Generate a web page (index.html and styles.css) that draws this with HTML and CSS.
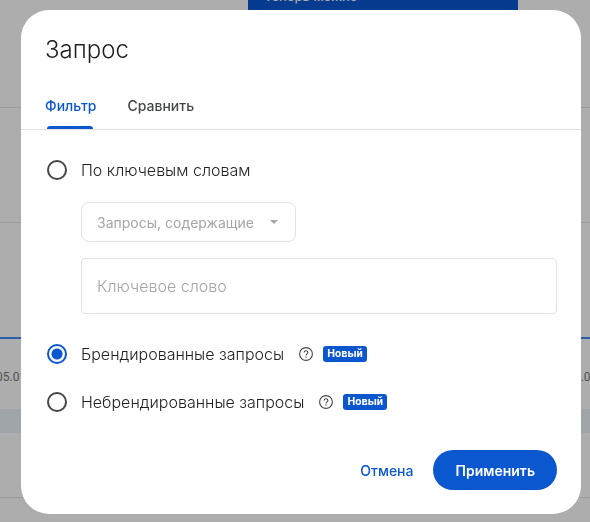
FILE: index.html
```html
<!DOCTYPE html>
<html lang="ru">
<head>
  <meta charset="UTF-8">
  <meta name="viewport" content="width=device-width, initial-scale=1.0">
  <title>Запрос</title>
  <link rel="stylesheet" href="styles.css">
</head>
<body>
  <div class="report" aria-hidden="true">
    <div class="promo">Теперь можно</div>
    <div class="chart">
      <div class="grid-row first"></div>
      <div class="grid-row"></div>
      <div class="grid-row axis"></div>
    </div>
    <div class="dates"><span>05.01.26</span><span>12.01.26</span></div>
    <div class="band"></div>
    <div class="table-head"></div>
  </div>

  <div class="overlay">
    <form class="dialog" role="dialog" aria-labelledby="dialogTitle">
      <h1 class="title" id="dialogTitle">Запрос</h1>
      <div class="tabs" role="tablist">
        <button type="button" class="tab active" role="tab" aria-selected="true">Фильтр</button>
        <button type="button" class="tab" role="tab" aria-selected="false">Сравнить</button>
      </div>

      <div class="options">
        <div class="option">
          <input type="radio" name="query" id="byKeyword">
          <label for="byKeyword">По ключевым словам</label>
        </div>
        <div class="fields">
          <div class="select-box">
            <select aria-label="Условие" disabled>
              <option>Запросы, содержащие</option>
            </select>
            <svg class="arrow" width="8" height="4" viewBox="0 0 8 4"><path d="M0 0h8L4 4z"/></svg>
          </div>
          <input type="text" class="keyword" placeholder="Ключевое слово" aria-label="Ключевое слово" disabled>
        </div>
        <div class="option">
          <input type="radio" name="query" id="branded" checked>
          <label for="branded">Брендированные запросы</label>
          <button type="button" class="help" aria-label="Справка">
            <svg width="14" height="14" viewBox="0 0 14 14"><circle cx="7" cy="7" r="6.4"/><path d="M5.1 5.6C5.1 4.4 5.9 3.7 7 3.7s1.9.7 1.9 1.7c0 1.5-1.9 1.5-1.9 3.1M7 9.5v1.2"/></svg>
          </button>
          <span class="badge">Новый</span>
        </div>
        <div class="option">
          <input type="radio" name="query" id="nonBranded">
          <label for="nonBranded">Небрендированные запросы</label>
          <button type="button" class="help" aria-label="Справка">
            <svg width="14" height="14" viewBox="0 0 14 14"><circle cx="7" cy="7" r="6.4"/><path d="M5.1 5.6C5.1 4.4 5.9 3.7 7 3.7s1.9.7 1.9 1.7c0 1.5-1.9 1.5-1.9 3.1M7 9.5v1.2"/></svg>
          </button>
          <span class="badge">Новый</span>
        </div>
      </div>

      <div class="actions">
        <button type="button" class="btn">Отмена</button>
        <button type="submit" class="btn primary">Применить</button>
      </div>
    </form>
  </div>
</body>
</html>
```
FILE: styles.css
```css
* {
  box-sizing: border-box;
}
:root {
  --blue: #0b57d0;
  --text: #1f1f1f;
  --muted: #444746;
  --line: #e1e3e1;
}
body {
  margin: 0;
  min-height: 100vh;
  overflow: hidden;
  background: #adadad;
  color: var(--text);
  font-family: Inter, Roboto, sans-serif;
}
button, input, select {
  font-family: inherit;
}

/* report behind the dialog */
.promo {
  width: 270px;
  height: 40px;
  margin: -14px auto 0 248px;
  padding: 0 16px;
  background: #063b8f;
  color: #adadad;
  font-size: 13px;
  font-weight: 500;
  line-height: 20px;
}
.chart {
  margin-top: -26px;
}
.grid-row {
  height: 115px;
  border-bottom: 1px solid #9d9d9d;
}
.grid-row.first {
  height: 108px;
}
.grid-row.axis {
  height: 116px;
  border-bottom: 2px solid #2a5caa;
}
.dates {
  display: flex;
  justify-content: space-between;
  margin: 0 -24px 0 -4px;
  padding: 28px 0 22px;
  color: #505152;
  font-family: Roboto, sans-serif;
  font-size: 12px;
  line-height: 20px;
}
.band {
  height: 24px;
  background: #a0a5a9;
}
.table-head {
  height: 65px;
  border-bottom: 1px solid #999;
}

/* dialog */
.overlay {
  position: fixed;
  inset: 0;
  padding: 10px 9px 8px 21px;
}
.dialog {
  max-width: 560px;
  margin: 0 auto;
  padding-bottom: 24px;
  background: #fff;
  border-radius: 28px;
}
.title {
  margin: 0;
  padding: 24px 24px 10px;
  font-size: 24px;
  font-weight: 300;
  line-height: 32px;
}
.tabs {
  display: flex;
  gap: 31px;
  padding: 6px 24px 0;
  border-bottom: 1px solid var(--line);
}
.tab {
  position: relative;
  height: 47px;
  padding: 0;
  border: none;
  background: none;
  color: var(--muted);
  font-size: 14px;
  font-weight: 500;
  cursor: pointer;
}
.tab.active {
  color: var(--blue);
}
.tab.active::after {
  content: "";
  position: absolute;
  right: 3px;
  bottom: 0;
  left: 2px;
  height: 3px;
  border-radius: 3px 3px 0 0;
  background: var(--blue);
}
.options {
  padding: 16px 24px 0;
}
.option {
  display: flex;
  align-items: center;
  height: 48px;
  padding-left: 2px;
  font-size: 16px;
  font-weight: 300;
}
.option input {
  appearance: none;
  width: 20px;
  height: 20px;
  margin: 0 14px 0 0;
  border: 2px solid var(--muted);
  border-radius: 50%;
}
.option input:checked {
  border-color: var(--blue);
  background: radial-gradient(circle, var(--blue) 5px, #fff 6px);
}
.help {
  display: flex;
  margin: 0 10px 0 15px;
  padding: 0;
  border: none;
  background: none;
}
.help svg {
  fill: none;
  stroke: var(--muted);
  stroke-width: 1.1;
}
.badge {
  padding: 0 4px;
  border-radius: 3px;
  background: var(--blue);
  color: #fff;
  font-family: Roboto, sans-serif;
  font-size: 11px;
  font-weight: 700;
  line-height: 16px;
}
.fields {
  padding: 8px 0 16px 36px;
}
.select-box {
  display: flex;
  align-items: center;
  width: 215px;
  height: 40px;
  margin-bottom: 16px;
  padding: 0 17px 0 15px;
  border: 1px solid var(--line);
  border-radius: 8px;
}
.select-box select {
  appearance: none;
  flex: 1;
  padding: 0;
  border: none;
  background: none;
  color: #a5a5a5;
  font-size: 14px;
  opacity: 1;
}
.arrow {
  fill: #a5a5a5;
}
.keyword {
  display: block;
  width: 100%;
  height: 56px;
  padding: 0 15px;
  border: 1px solid var(--line);
  border-radius: 4px;
  background: #fff;
  font-size: 16px;
  font-weight: 300;
}
.keyword::placeholder {
  color: #a5a5a5;
}
.actions {
  display: flex;
  justify-content: flex-end;
  gap: 8px;
  padding: 24px 24px 0;
}
.btn {
  height: 40px;
  padding: 0 12px;
  border: none;
  border-radius: 20px;
  background: none;
  color: var(--blue);
  font-size: 14px;
  font-weight: 500;
  cursor: pointer;
}
.btn.primary {
  padding: 0 22px;
  background: var(--blue);
  color: #fff;
  font-weight: 600;
}
```
